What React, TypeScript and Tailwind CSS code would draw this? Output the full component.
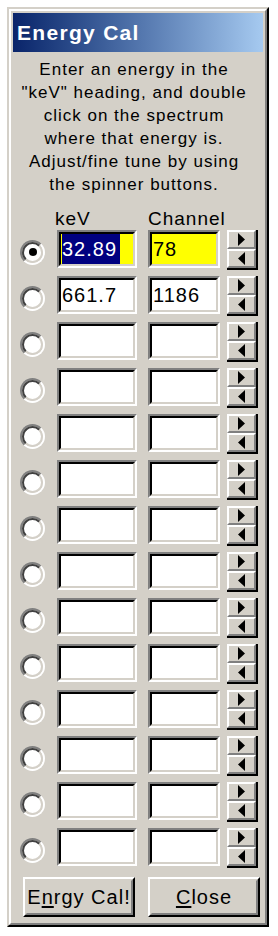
import React from "react";

const FONT = "font-['Liberation_Sans',Arial,sans-serif]";

const rows: { kev: string; ch: string; sel?: boolean }[] = [
  { kev: "32.89", ch: "78", sel: true },
  { kev: "661.7", ch: "1186" },
  ...Array.from({ length: 12 }, () => ({ kev: "", ch: "" })),
];

function Radio({ checked }: { checked?: boolean }) {
  return (
    <div className="mt-[6px] w-[25px] h-[25px] shrink-0 rounded-full border-2 border-t-[#808080] border-l-[#808080] border-b-white border-r-white">
      <div className="w-full h-full rounded-full border-2 border-t-[#404040] border-l-[#404040] border-b-[#d4d0c8] border-r-[#d4d0c8] bg-white flex items-center justify-center">
        {checked && <div className="w-[8px] h-[8px] rounded-full bg-black" />}
      </div>
    </div>
  );
}

function Field({
  w,
  yellow,
  children,
}: {
  w: string;
  yellow?: boolean;
  children?: React.ReactNode;
}) {
  return (
    <div
      className={`${w} h-[38px] shrink-0 border-2 border-t-[#808080] border-l-[#808080] border-b-white border-r-white`}
    >
      <div
        className={`h-full border-2 border-t-black border-l-black border-b-[#d4d0c8] border-r-[#d4d0c8] ${
          yellow ? "bg-[#ffff00]" : "bg-white"
        } flex items-center text-[20px] tracking-[1px] text-black overflow-hidden`}
      >
        {children}
      </div>
    </div>
  );
}

function Spinner() {
  return (
    <div className="w-[31px] h-[40px] shrink-0 flex flex-col border-r-2 border-b-2 border-black">
      <div className="flex-1 bg-[#d4d0c8] border-2 border-t-white border-l-white border-b-[#808080] border-r-[#808080] flex items-center justify-center">
        <svg width="7" height="13" viewBox="0 0 7 13">
          <polygon points="0,0 7,6.5 0,13" fill="black" />
        </svg>
      </div>
      <div className="flex-1 bg-[#d4d0c8] border-2 border-t-white border-l-white border-b-[#808080] border-r-[#808080] flex items-center justify-center">
        <svg width="7" height="13" viewBox="0 0 7 13">
          <polygon points="7,0 0,6.5 7,13" fill="black" />
        </svg>
      </div>
    </div>
  );
}

function Btn({ children }: { children: React.ReactNode }) {
  return (
    <div className="w-[112px] h-[40px] border-2 border-t-white border-l-white border-b-black border-r-black">
      <div className="h-full bg-[#d4d0c8] border-2 border-t-[#d4d0c8] border-l-[#d4d0c8] border-b-[#808080] border-r-[#808080] flex items-center justify-center text-[20px] tracking-[1px] text-black">
        {children}
      </div>
    </div>
  );
}

export default function App() {
  return (
    <div className={`min-h-screen bg-white pt-[7px] pl-[7px] ${FONT}`}>
      <div className="w-[262px] h-[920px] border-2 border-t-[#d4d0c8] border-l-[#d4d0c8] border-b-black border-r-black">
        <div className="h-full border-2 border-t-white border-l-white border-b-[#808080] border-r-[#808080] bg-[#d4d0c8] p-[2px] flex flex-col">
          <div className="h-[39px] shrink-0 bg-gradient-to-r from-[#0a246a] to-[#a6caf0] flex items-center pl-[4px]">
            <span className="text-white font-bold text-[21px] tracking-[1.3px]">Energy Cal</span>
          </div>

          <div className="mt-[6px] pr-[8px] text-center text-black text-[17px] leading-[23px] tracking-[1px]">
            <div>Enter an energy in the</div>
            <div>"keV" heading, and double</div>
            <div>click on the spectrum</div>
            <div>where that energy is.</div>
            <div>Adjust/fine tune by using</div>
            <div>the spinner buttons.</div>
          </div>

          <div className="mt-[13px] h-[20px] flex items-center text-[19px] tracking-[1px] text-black">
            <span className="ml-[42px] w-[93px]">keV</span>
            <span>Channel</span>
          </div>

          <div className="mt-[1px] flex flex-col gap-[8px]">
            {rows.map((r, i) => (
              <div key={i} className="h-[38px] flex items-center pl-[7px]">
                <Radio checked={r.sel} />
                <div className="ml-[12px]">
                  <Field w="w-[80px]" yellow={r.sel}>
                    {r.sel ? (
                      <span className="ml-px h-[30px] flex items-center bg-[#000080] text-white pr-[3px]">
                        {r.kev}
                      </span>
                    ) : (
                      <span className="pl-px">{r.kev}</span>
                    )}
                  </Field>
                </div>
                <div className="ml-[11px]">
                  <Field w="w-[72px]" yellow={r.sel}>
                    <span className="pl-px">{r.ch}</span>
                  </Field>
                </div>
                <div className="ml-[7px] mt-[1px]">
                  <Spinner />
                </div>
              </div>
            ))}
          </div>

          <div className="mt-[11px] flex pl-[10px] gap-[13px]">
            <Btn>
              E<span className="underline underline-offset-2">n</span>rgy Cal!
            </Btn>
            <Btn>
              <span className="underline underline-offset-2">C</span>lose
            </Btn>
          </div>
        </div>
      </div>
    </div>
  );
}
